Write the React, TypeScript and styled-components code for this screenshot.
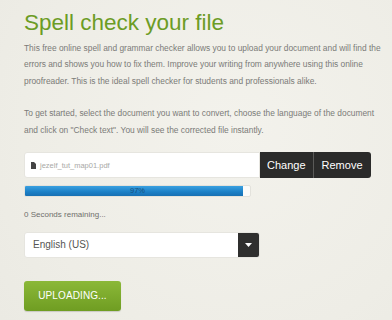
import React from 'react';
import { styled, createGlobalStyle } from 'styled-components';

const GlobalStyle = createGlobalStyle`
  html, body {
    margin: 0;
    padding: 0;
    background: #efeee8;
  }
  body {
    font-family: "Liberation Sans", Arial, sans-serif;
  }
`;

const Page = styled.div`
  width: 392px;
  height: 320px;
  overflow: hidden;
  padding: 10px 4px 0 24px;
  box-sizing: border-box;
  background: radial-gradient(circle at 60% 40%, #f3f2ec 0%, #eeede6 70%, #ebeae3 100%);
`;

const Title = styled.h1`
  margin: 0;
  font-size: 22.5px;
  line-height: 26px;
  font-weight: normal;
  color: #6c9c25;
`;

const Paragraph = styled.p`
  margin: 3.5px 0 0;
  font-size: 8.4px;
  line-height: 16.5px;
  color: #7b7b78;
  & + & {
    margin-top: 16px;
  }
`;

const UploadRow = styled.div`
  display: flex;
  margin-top: 14px;
  height: 26px;
`;

const FileField = styled.div`
  width: 236px;
  display: flex;
  align-items: center;
  gap: 4px;
  padding-left: 6px;
  box-sizing: border-box;
  background: #ffffff;
  border: 1px solid #e6e5df;
  border-radius: 3px 0 0 3px;
  font-size: 7.5px;
  color: #a9a9a6;
`;

const DarkButton = styled.button<{ $last?: boolean }>`
  height: 26px;
  padding: 0 ${(p) => (p.$last ? '8px' : '7px')};
  border: none;
  border-left: ${(p) => (p.$last ? '1px solid #5a5a58' : 'none')};
  border-radius: ${(p) => (p.$last ? '0 3px 3px 0' : '0')};
  background: #2b2b2a;
  color: #ffffff;
  font-family: "Liberation Sans", Arial, sans-serif;
  font-size: 11px;
  line-height: 26px;
`;

const Progress = styled.div`
  position: relative;
  margin-top: 7px;
  width: 227px;
  height: 12px;
  box-sizing: border-box;
  background: #fbfbfa;
  border: 1px solid #e3e2dc;
  border-radius: 2px;
  overflow: hidden;
`;

const ProgressFill = styled.div`
  height: 100%;
  background: linear-gradient(#3aa0e0, #1b7fc6 60%, #1770b3);
`;

const ProgressLabel = styled.span`
  position: absolute;
  inset: 0;
  text-align: center;
  font-size: 7.5px;
  line-height: 10px;
  color: #154f7c;
`;

const Remaining = styled.div`
  margin-top: 10px;
  font-size: 8px;
  line-height: 16.5px;
  color: #6f6f6c;
`;

const Select = styled.div`
  margin-top: 8px;
  width: 236px;
  height: 26px;
  display: flex;
  align-items: center;
  box-sizing: border-box;
  background: #ffffff;
  border: 1px solid #e6e5df;
  border-radius: 3px;
  overflow: hidden;
  font-size: 10px;
  color: #555553;
`;

const SelectValue = styled.span`
  flex: 1;
  padding-left: 8px;
`;

const Caret = styled.span`
  width: 21px;
  height: 100%;
  display: flex;
  align-items: center;
  justify-content: center;
  background: #2f2f2e;
`;

const SubmitButton = styled.button`
  margin-top: 23px;
  width: 97px;
  height: 30px;
  border: none;
  border-radius: 3px;
  background: linear-gradient(#8bb838, #6f9d22);
  box-shadow: 0 1px 1px rgba(0, 0, 0, 0.15);
  color: #ffffff;
  font-family: "Liberation Sans", Arial, sans-serif;
  font-size: 10px;
  letter-spacing: 0.1px;
`;

const FileIcon = () => (
  <svg width="5" height="7" viewBox="0 0 5 7">
    <path d="M0 0H3L5 2V7H0Z" fill="#444" />
  </svg>
);

export default function App() {
  const progress = 97;
  return (
    <Page>
      <GlobalStyle />
      <Title>Spell check your file</Title>
      <Paragraph>
        This free online spell and grammar checker allows you to upload your document and will find the
        errors and shows you how to fix them. Improve your writing from anywhere using this online
        proofreader. This is the ideal spell checker for students and professionals alike.
      </Paragraph>
      <Paragraph>
        To get started, select the document you want to convert, choose the language of the document and
        click on "Check text". You will see the corrected file instantly.
      </Paragraph>
      <UploadRow>
        <FileField>
          <FileIcon />
          jezelf_tut_map01.pdf
        </FileField>
        <DarkButton>Change</DarkButton>
        <DarkButton $last>Remove</DarkButton>
      </UploadRow>
      <Progress>
        <ProgressFill style={{ width: `${progress}%` }} />
        <ProgressLabel>{progress}%</ProgressLabel>
      </Progress>
      <Remaining>0 Seconds remaining...</Remaining>
      <Select>
        <SelectValue>English (US)</SelectValue>
        <Caret>
          <svg width="7" height="4" viewBox="0 0 7 4">
            <path d="M0 0H7L3.5 4Z" fill="#fff" />
          </svg>
        </Caret>
      </Select>
      <SubmitButton>UPLOADING...</SubmitButton>
    </Page>
  );
}
